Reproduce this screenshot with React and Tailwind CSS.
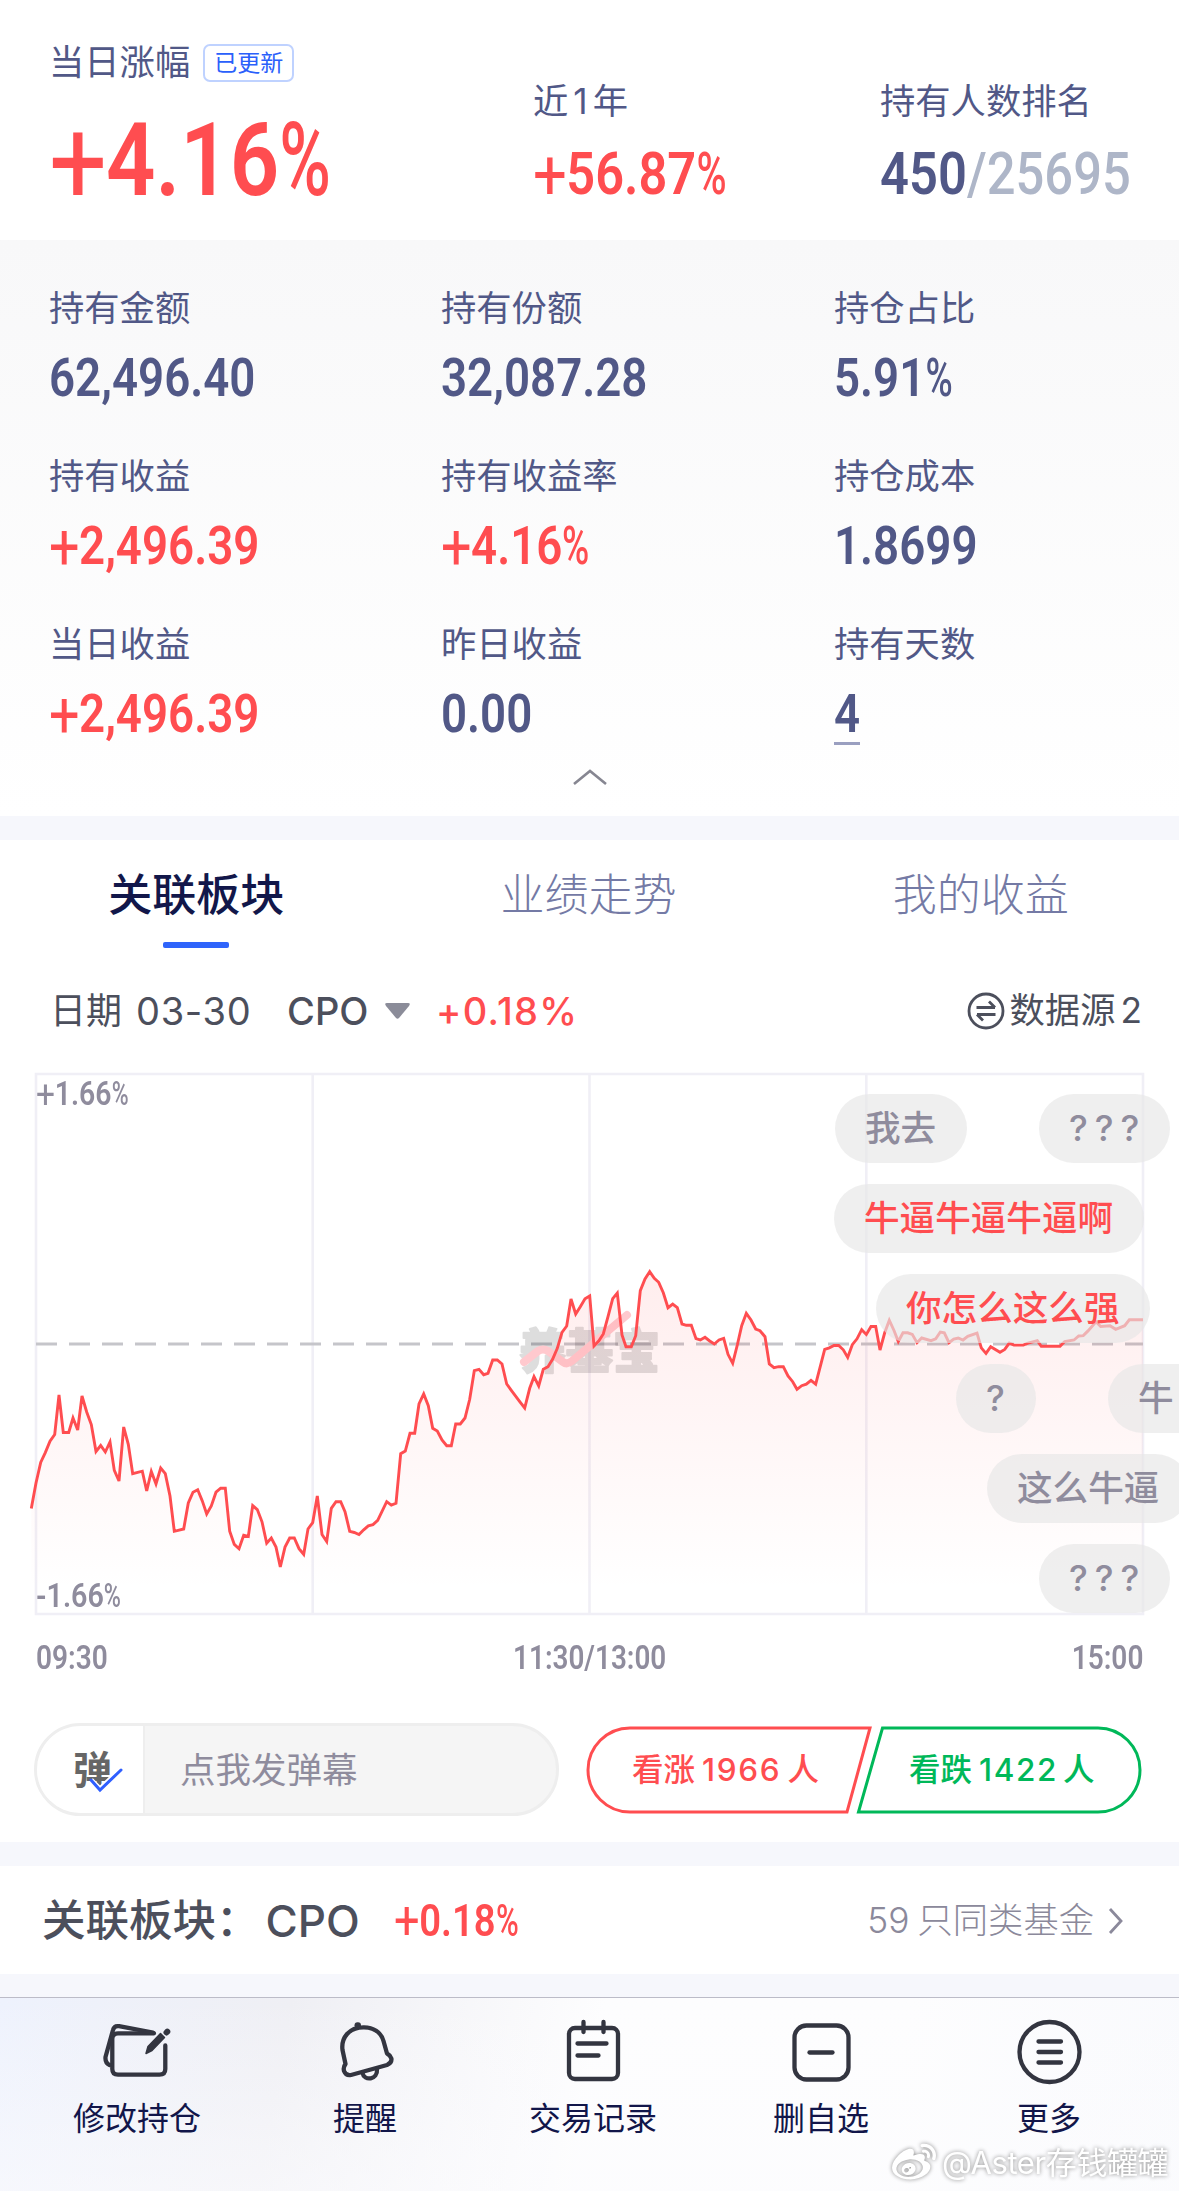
import { FaWeibo } from 'react-icons/fa';

const HOLDINGS = [
  { label: '持有金额', value: '62,496.40' },
  { label: '持有份额', value: '32,087.28' },
  { label: '持仓占比', value: '5.91%' },
  { label: '持有收益', value: '+2,496.39', up: true },
  { label: '持有收益率', value: '+4.16%', up: true },
  { label: '持仓成本', value: '1.8699' },
  { label: '当日收益', value: '+2,496.39', up: true },
  { label: '昨日收益', value: '0.00' },
  { label: '持有天数', value: '4', underline: true },
];

const TABS = ['关联板块', '业绩走势', '我的收益'];

// Intraday line, in the chart's own 1179 x 560 space
const LINE =
  '31.3,448.4 36,423 40.7,402.5 45.3,392.6 50,381.2 54.7,374.5 59,335 63.3,372.5 68.7,372.5 73,358 77.7,370 82,336 86.7,352 91.3,364.6 96,391.5 100.7,385.5 105.3,392 110,382 114.3,410.4 119,421 123.7,367 128.3,384.3 132.7,413.6 142.3,411.2 146.7,431 151.3,411.5 156,424 160.7,408 165.3,413.6 170,436 174.3,471.3 183.7,469 188.3,442.9 193,432.2 197.7,429.8 202.3,440.9 206.7,454 211.3,446 216,432.2 220.7,428.2 225.3,428.2 229.7,471.3 234.3,484.4 239,488.7 243.7,475.3 248.3,476.5 252.7,445.6 257.3,449.6 262,461.8 266.7,483.2 271.3,478 276,487.1 280.3,507 285,487.1 289.7,478 294.3,478 299,488.7 303.7,494.3 308,469 312.7,462.6 317.3,436 322,474.5 326.7,481.6 331.3,448.4 336,441.7 340.7,441.7 345,451.6 349.7,471.3 354.3,472.5 359,474.5 363.7,469.8 368.3,465.8 373,464.6 377.7,460.3 386.7,441.7 391.3,445.2 396,443.3 400.7,393.7 405.3,391 410,373.3 414.7,373.3 419,344 423.7,334 428.3,345.7 432.7,368.3 437.3,371 442,380 446.7,385.7 451.3,385.7 455.7,364 460.3,364 465,358 469.7,339.3 474.3,310.7 479,309.3 483.7,314.7 488,313.3 492.7,300 497.3,300 502,304 506.7,324 511.3,330.3 520.3,342.3 524.7,348 529.7,328.3 534,316.7 538.7,326 543.3,309.3 548,306.7 552.7,299 557.3,288.3 562,272.3 566.7,266 571,239 575.7,254 580.3,246.7 585,238.7 589.7,236 594,286 598.7,281 603.3,274 608,256.7 612.7,238.7 617.3,233 622,275 626,286.7 631.3,286.7 635.7,275.7 640.3,230.7 645,219 649.7,211.7 654.3,218.3 658.7,222.3 663.3,232.7 668,247.7 672.7,244 677.3,247.7 682,264 686.3,265.3 691.3,265.3 696,278.7 700.3,280 705,277.3 709.7,281 714.3,284 719,280 723.7,278.3 728,294.3 732.7,303.3 737.3,285 741.7,265.7 746.3,253.3 751,260 755.7,269 760,270.7 765,276.7 769.3,304 774,307.7 778.7,306.7 783.3,306.7 788,316 792.7,321.7 797,329.3 801.7,325.7 806.3,324.2 811,320.3 815.7,324.2 824.7,289.4 829.3,287.9 834,285.5 838.7,285.5 843.3,289.8 847.7,297.4 852.3,284.7 857,278.8 861.7,269.7 866.3,274.4 871,266.5 875.7,266.5 880,290 884.7,272.8 889.3,260.2 894,270.5 898.3,281.5 903,272.8 907.7,272.8 912.3,274.4 917,282.7 921.7,278 931,280.7 935.7,278.8 940.3,272 944.3,272.8 949,282.7 953.7,279.2 958.3,278 963,280 967.7,276.4 977,273.2 981.3,287.9 986,293.4 990.7,286.7 1000,292.2 1004.7,289.4 1009.3,283.1 1014,285.1 1023.3,285.1 1028,283.1 1037.3,280.7 1041.3,286.3 1060,286.3 1064.7,281.5 1074,280 1078.7,276 1083.3,275.6 1088,270.9 1096,261.8 1100.7,266.5 1110,265.7 1115.7,269.3 1124.7,265.7 1129.3,259.8 1143,259.8';

const COMMENTS = [
  { text: '我去', pos: 'left-[835px] top-[34px]' },
  { text: '???', pos: 'left-[1039px] top-[34px]', wide: true },
  { text: '牛逼牛逼牛逼啊', pos: 'left-[834px] top-[124px]', hot: true },
  { text: '你怎么这么强', pos: 'left-[876px] top-[214px]', hot: true },
  { text: '?', pos: 'left-[956px] top-[304px]', wide: true },
  { text: '牛', pos: 'left-[1108px] top-[304px] w-[160px]' },
  { text: '这么牛逼', pos: 'left-[987px] top-[394px]' },
  { text: '???', pos: 'left-[1039px] top-[484px]', wide: true },
];

// Condensed figures with a light, wide plus sign and a narrow percent sign
function Num({ className = '', children }) {
  const text = String(children);
  const plus = text.startsWith('+');
  const percent = text.endsWith('%');
  const body = text.slice(plus ? 1 : 0, percent ? -1 : undefined);
  return (
    <span className={`block w-max whitespace-nowrap font-['Roboto'] font-semibold ${className}`}>
      {plus && <span className="mr-[0.09em] inline-block origin-bottom-left translate-y-[0.13em] scale-[1.18] font-normal">+</span>}
      {body}
      {percent && <span className="-mr-[0.13em] inline-block origin-left scale-x-[0.81] font-medium">%</span>}
    </span>
  );
}

function Summary() {
  return (
    <section className="flex h-[240px] bg-white pl-[49px] text-[#515887]">
      <div className="w-[484px] pt-[39px]">
        <div className="flex items-center gap-[13px]">
          <span className="text-[35.3px] leading-[48px]">当日涨幅</span>
          <span className="h-[38px] rounded-[7px] border-2 border-[#bfd2ff] px-[9px] text-[23px] leading-[34px] text-[#2a60fb]">
            已更新
          </span>
        </div>
        <Num className="mt-[13px] origin-left scale-x-[0.85] text-[102px] leading-[120px] text-[#ff4d50]">+4.16%</Num>
      </div>
      <div className="w-[347px] pt-[78px]">
        <div className="text-[35.3px] leading-[48px]">近<span className="px-[5px]">1</span>年</div>
        <Num className="mt-[13px] origin-left scale-x-[0.843] text-[60px] leading-[70px] text-[#ff4d50]">+56.87%</Num>
      </div>
      <div className="pt-[78px]">
        <div className="text-[35.3px] leading-[48px]">持有人数排名</div>
        <div className="mt-[13px] flex w-max origin-left scale-x-[0.845] text-[60px] leading-[70px]">
          <Num>450</Num>
          <Num className="font-medium! text-[#aeb6c8]">/25695</Num>
        </div>
      </div>
    </section>
  );
}

function Holdings() {
  return (
    <section className="h-[576px] bg-linear-to-b from-[#f8f8f9] to-white pt-[45px] text-[#515887]">
      <div className="grid grid-cols-[392px_393px_1fr] pl-[49px]">
        {HOLDINGS.map((item) => (
          <div key={item.label} className="h-[168px]">
            <div className="text-[35.3px] leading-[48px]">{item.label}</div>
            <Num className={`mt-[13px] origin-left scale-x-[0.84] text-[54.4px] leading-[64px] ${item.up ? 'text-[#ff4d50]' : ''}`}>
              {item.value}
            </Num>
            {item.underline && <div className="-mt-[4px] h-[3px] w-[26px] bg-[#9a9fc0]" />}
          </div>
        ))}
      </div>
      <svg className="mx-auto -mt-[21px] block h-[18px] w-[36px]" viewBox="0 0 36 18" fill="none">
        <path d="M2 16 18 3l16 13" stroke="#868691" strokeWidth="2.6" />
      </svg>
    </section>
  );
}

function Chart() {
  return (
    <div className="relative h-[560px] overflow-hidden">
      <svg className="block h-[560px] w-[1179px]" viewBox="0 0 1179 560" fill="none">
        <defs>
          <linearGradient id="area" x1="0" y1="211" x2="0" y2="530" gradientUnits="userSpaceOnUse">
            <stop offset="0" stopColor="#ff4d50" stopOpacity="0.1" />
            <stop offset="1" stopColor="#ff4d50" stopOpacity="0" />
          </linearGradient>
        </defs>
        <path d="M36 14H1143V554H36ZM312.7 14V554M589.5 14V554M866.3 14V554" stroke="#f0eff6" strokeWidth="2.6" />
        <path d="M36 284H1143" stroke="#c5c5ca" strokeWidth="2.8" strokeDasharray="21 12" />
        <text x="519" y="308" fill="#000" stroke="#000" strokeWidth="2" strokeLinejoin="round" opacity="0.13"
              fontFamily="Noto Sans CJK SC" fontWeight="900" fontSize="47" textLength="141">养基宝</text>
        <path d="M524 302 538 291Q543 288 548 291L563 302Q567 305 572 301L627 255" stroke="#ffc9ce" strokeWidth="8"
              strokeLinecap="round" strokeLinejoin="round" />
        <polygon points={`${LINE} 1143,554 31.3,554`} fill="url(#area)" />
        <polyline points={LINE} stroke="#ff4d50" strokeWidth="2.9" />
      </svg>
      <div className="absolute left-[36px] top-[14px] text-[#8f8c9d]">
        <Num className="origin-left scale-x-[0.86] text-[33px] leading-[40px]">+1.66%</Num>
      </div>
      <div className="absolute left-[36px] top-[516px] text-[#8f8c9d]">
        <Num className="origin-left scale-x-[0.87] text-[33px] leading-[40px]">-1.66%</Num>
      </div>
      {COMMENTS.map((item, i) => (
        <div
          key={i}
          className={`absolute h-[69px] whitespace-nowrap rounded-full bg-[#e7e7e7]/65 pl-[30px] text-[35.6px] font-medium leading-[69px] ${item.pos} ${item.hot ? 'text-[#ff4d50]' : 'text-[#8f8c9d]'} ${item.wide ? 'pr-[24px] text-[33px] tracking-[7px]' : 'pr-[31px]'}`}
        >
          {item.text}
        </div>
      ))}
    </div>
  );
}

function SectorCard() {
  return (
    <section className="mt-[24px] h-[1002px] bg-white">
      <div className="grid h-[114px] grid-cols-3 pr-[2px] pt-[25px] text-center text-[44px] leading-[60px]">
        {TABS.map((tab, i) => (
          <div key={tab} className={i === 0 ? 'font-medium text-[#12174a]' : 'font-light text-[#747aa5]'}>
            {tab}
            {i === 0 && <div className="mx-auto mt-[17px] h-[6px] w-[66px] rounded-[2px] bg-[#2f64fb]" />}
          </div>
        ))}
      </div>

      <div className="flex h-[106px] items-center pl-[50px] pr-[37px] pt-[8px] text-[38px] leading-[48px] text-[#4c4f5c]">
        <span className="text-[36px]">日期</span>
        <span className="ml-[14px] w-[151px] tracking-[0.7px]">03-30</span>
        <span className="w-[98px] font-medium">CPO</span>
        <svg className="h-[16px] w-[25px]" viewBox="0 0 25 16">
          <path d="M2 0h21q3 0 1 3L14 15q-1.500 1.500-3 0L1 3q-2-3 1-3" fill="#8b8c99" />
        </svg>
        <span className="ml-[26px] font-[450] tracking-[1.3px] text-[#ff4d50]">+0.18%</span>
        <svg className="ml-auto h-[38px] w-[38px]" viewBox="0 0 38 38" fill="none" stroke="#4c4f5c" strokeWidth="2.800">
          <circle cx="19" cy="19" r="17" />
          <path d="M9.500 15.500H28M22 9.500 28 15.500M28.500 22.500H10M16 28.500 10 22.500" />
        </svg>
        <span className="ml-[5px] text-[35.3px]">数据源</span>
        <span className="ml-[5px] text-[35.3px]">2</span>
      </div>

      <Chart />

      <div className="flex h-[76px] items-center justify-between px-[36px] text-[#8f8c9d]">
        <div className="w-[160px]"><Num className="origin-left scale-x-[0.85] text-[33px]">09:30</Num></div>
        <Num className="scale-x-[0.845] text-[33px]">11:30/13:00</Num>
        <div className="flex w-[160px] justify-end"><Num className="origin-right scale-x-[0.85] text-[33px]">15:00</Num></div>
      </div>

      <div className="mt-[27px] flex items-center pl-[34px]">
        <div className="flex h-[93px] w-[525px] overflow-hidden rounded-full border-[3px] border-[#eeeeee] bg-[#f5f5f5]">
          <div className="relative w-[108px] border-r-2 border-[#eeeeee] bg-white pl-[36px] text-[39px] font-bold leading-[87px] text-[#666]">
            弹
            <svg className="absolute left-[50px] top-[40px] h-[30px] w-[38px]" viewBox="0 0 38 30" fill="none">
              <path d="M3 15 13 25 35 4" stroke="#fff" strokeWidth="8" />
              <path d="M4 14 13 24 34 4" stroke="#2f5fff" strokeWidth="3" strokeLinecap="round" />
            </svg>
          </div>
          <span className="pl-[35px] text-[35.5px] leading-[90px] text-[#8f8c9d]">点我发弹幕</span>
        </div>

        <div className="relative ml-[26px] flex h-[90px] w-[559px] text-[31.5px] font-medium leading-[90px]">
          <svg className="absolute inset-0 h-[90px] w-[559px]" viewBox="0 0 559 90" fill="none" strokeWidth="3">
            <path d="M45 3H285L262 87H45A42 42 0 0 1 45 3Z" stroke="#ff4d50" />
            <path d="M297.500 3H513A42 42 0 0 1 513 87H273.500Z" stroke="#00b859" />
          </svg>
          <div className="w-[277px] pl-[47px] text-[#ff4d50]">看涨<span className="pl-[7px] pr-[6px] tracking-[1.7px]">1966</span>人</div>
          <div className="pl-[47px] text-[#00b859]">看跌<span className="pl-[7px] pr-[5px] tracking-[1.6px]">1422</span>人</div>
        </div>
      </div>
    </section>
  );
}

function SectorRow() {
  return (
    <section className="mt-[24px] flex h-[108px] items-center bg-white pl-[42px] pt-[1px] text-[#4c4f5c]">
      <span className="text-[43.500px] font-medium">关联板块：</span>
      <span className="ml-[6px] w-[128px] text-[44px] font-medium">CPO</span>
      <Num className="origin-left scale-x-[0.85] text-[45px] text-[#ff4d50]">+0.18%</Num>
      <span className="ml-auto flex items-center pt-[1px] text-[35.300px] font-light text-[#8b899b]">
        <span className="mr-[8px]">59</span>只同类基金
      </span>
      <svg className="ml-[14px] mr-[55px] h-[28px] w-[16px]" viewBox="0 0 16 28" fill="none">
        <path d="M2 2 13 14 2 26" stroke="#8b899b" strokeWidth="2.800" />
      </svg>
    </section>
  );
}

function EditIcon() {
  return (
    <>
      <path d="M53 15.300H17Q11.300 15.300 11.300 21V51Q11.300 56.700 17 56.700H58.500Q64.300 56.700 64.300 51V27.500" />
      <path d="M52 14.500 18 8.200Q13 7.500 12 12L4.500 39Q4 45 8.500 47" />
      <path d="M45 35.500 47 28.500 59.500 15.500 63.500 19.500 51 32.500Z" fill="#333540" strokeWidth="1.500" />
      <path d="M65.500 14.500 66.300 13.700" strokeWidth="6" />
    </>
  );
}

function BellIcon() {
  return (
    <>
      <path d="M35 9.300C20 9 12 20 13.500 32L16.500 46Q14 49 15 53Q17 58 22 57L58 47Q63 45 62.400 40.500Q61 37 58 35.500L54.500 23C52 14 44 9.500 35 9.300Z" />
      <path d="M28.500 7.200h.5" strokeWidth="6" />
      <path d="M33.500 55C35 63.500 49 62 48 51" />
    </>
  );
}

function RecordIcon() {
  return (
    <>
      <rect x="12" y="10" width="49" height="51" rx="6" />
      <path d="M26.500 4V14M46.500 4V14M20.500 25.500H49.500M20.500 37.500H41.500" />
    </>
  );
}

function RemoveIcon() {
  return (
    <>
      <rect x="9.500" y="7.500" width="54" height="54" rx="12" />
      <path d="M24.500 34.500H47.500" />
    </>
  );
}

function MoreIcon() {
  return (
    <>
      <circle cx="36.500" cy="34" r="30" />
      <path d="M25.500 23.500H48M25.500 34H48M25.500 44.500H48" />
    </>
  );
}

const ACTIONS = [
  { label: '修改持仓', Icon: EditIcon },
  { label: '提醒', Icon: BellIcon },
  { label: '交易记录', Icon: RecordIcon },
  { label: '删自选', Icon: RemoveIcon },
  { label: '更多', Icon: MoreIcon },
];

function BottomBar() {
  return (
    <nav className="relative mt-[23px] h-[194px] border-t border-[#bcbcc8] bg-[linear-gradient(to_bottom,transparent,rgba(252,252,254,0.6)),linear-gradient(100deg,#eef2fd_0%,#efeff4_24%,#fdfdfe_50%,#fdfdfe_75%,#f9fafd_100%)]">
      <div className="grid grid-cols-5 pl-[23px] pr-[16px] pt-[20px]">
        {ACTIONS.map(({ label, Icon }) => (
          <div key={label} className="flex flex-col items-center">
            <svg className="h-[72px] w-[72px]" viewBox="0 0 72 72" fill="none" stroke="#333540" strokeWidth="4.300" strokeLinecap="round" strokeLinejoin="round">
              <Icon />
            </svg>
            <span className="mt-[6px] text-[32px] leading-[45px] text-[#12164a]">{label}</span>
          </div>
        ))}
      </div>
      <div className="absolute left-[892px] top-[142px] flex items-center gap-[6px] whitespace-nowrap text-[31px] leading-[46px] text-white [filter:drop-shadow(0_0_2px_#888)]">
        <FaWeibo className="h-[44px] w-[44px]" />
        <span className="tracking-[-0.4px]">@Aster存钱罐罐</span>
      </div>
    </nav>
  );
}

export default function App() {
  return (
    <div className="h-[2191px] w-[1179px] overflow-hidden bg-[#f6f7fc] font-['Inter','Noto_Sans_CJK_SC',sans-serif]">
      <Summary />
      <Holdings />
      <SectorCard />
      <SectorRow />
      <BottomBar />
    </div>
  );
}
